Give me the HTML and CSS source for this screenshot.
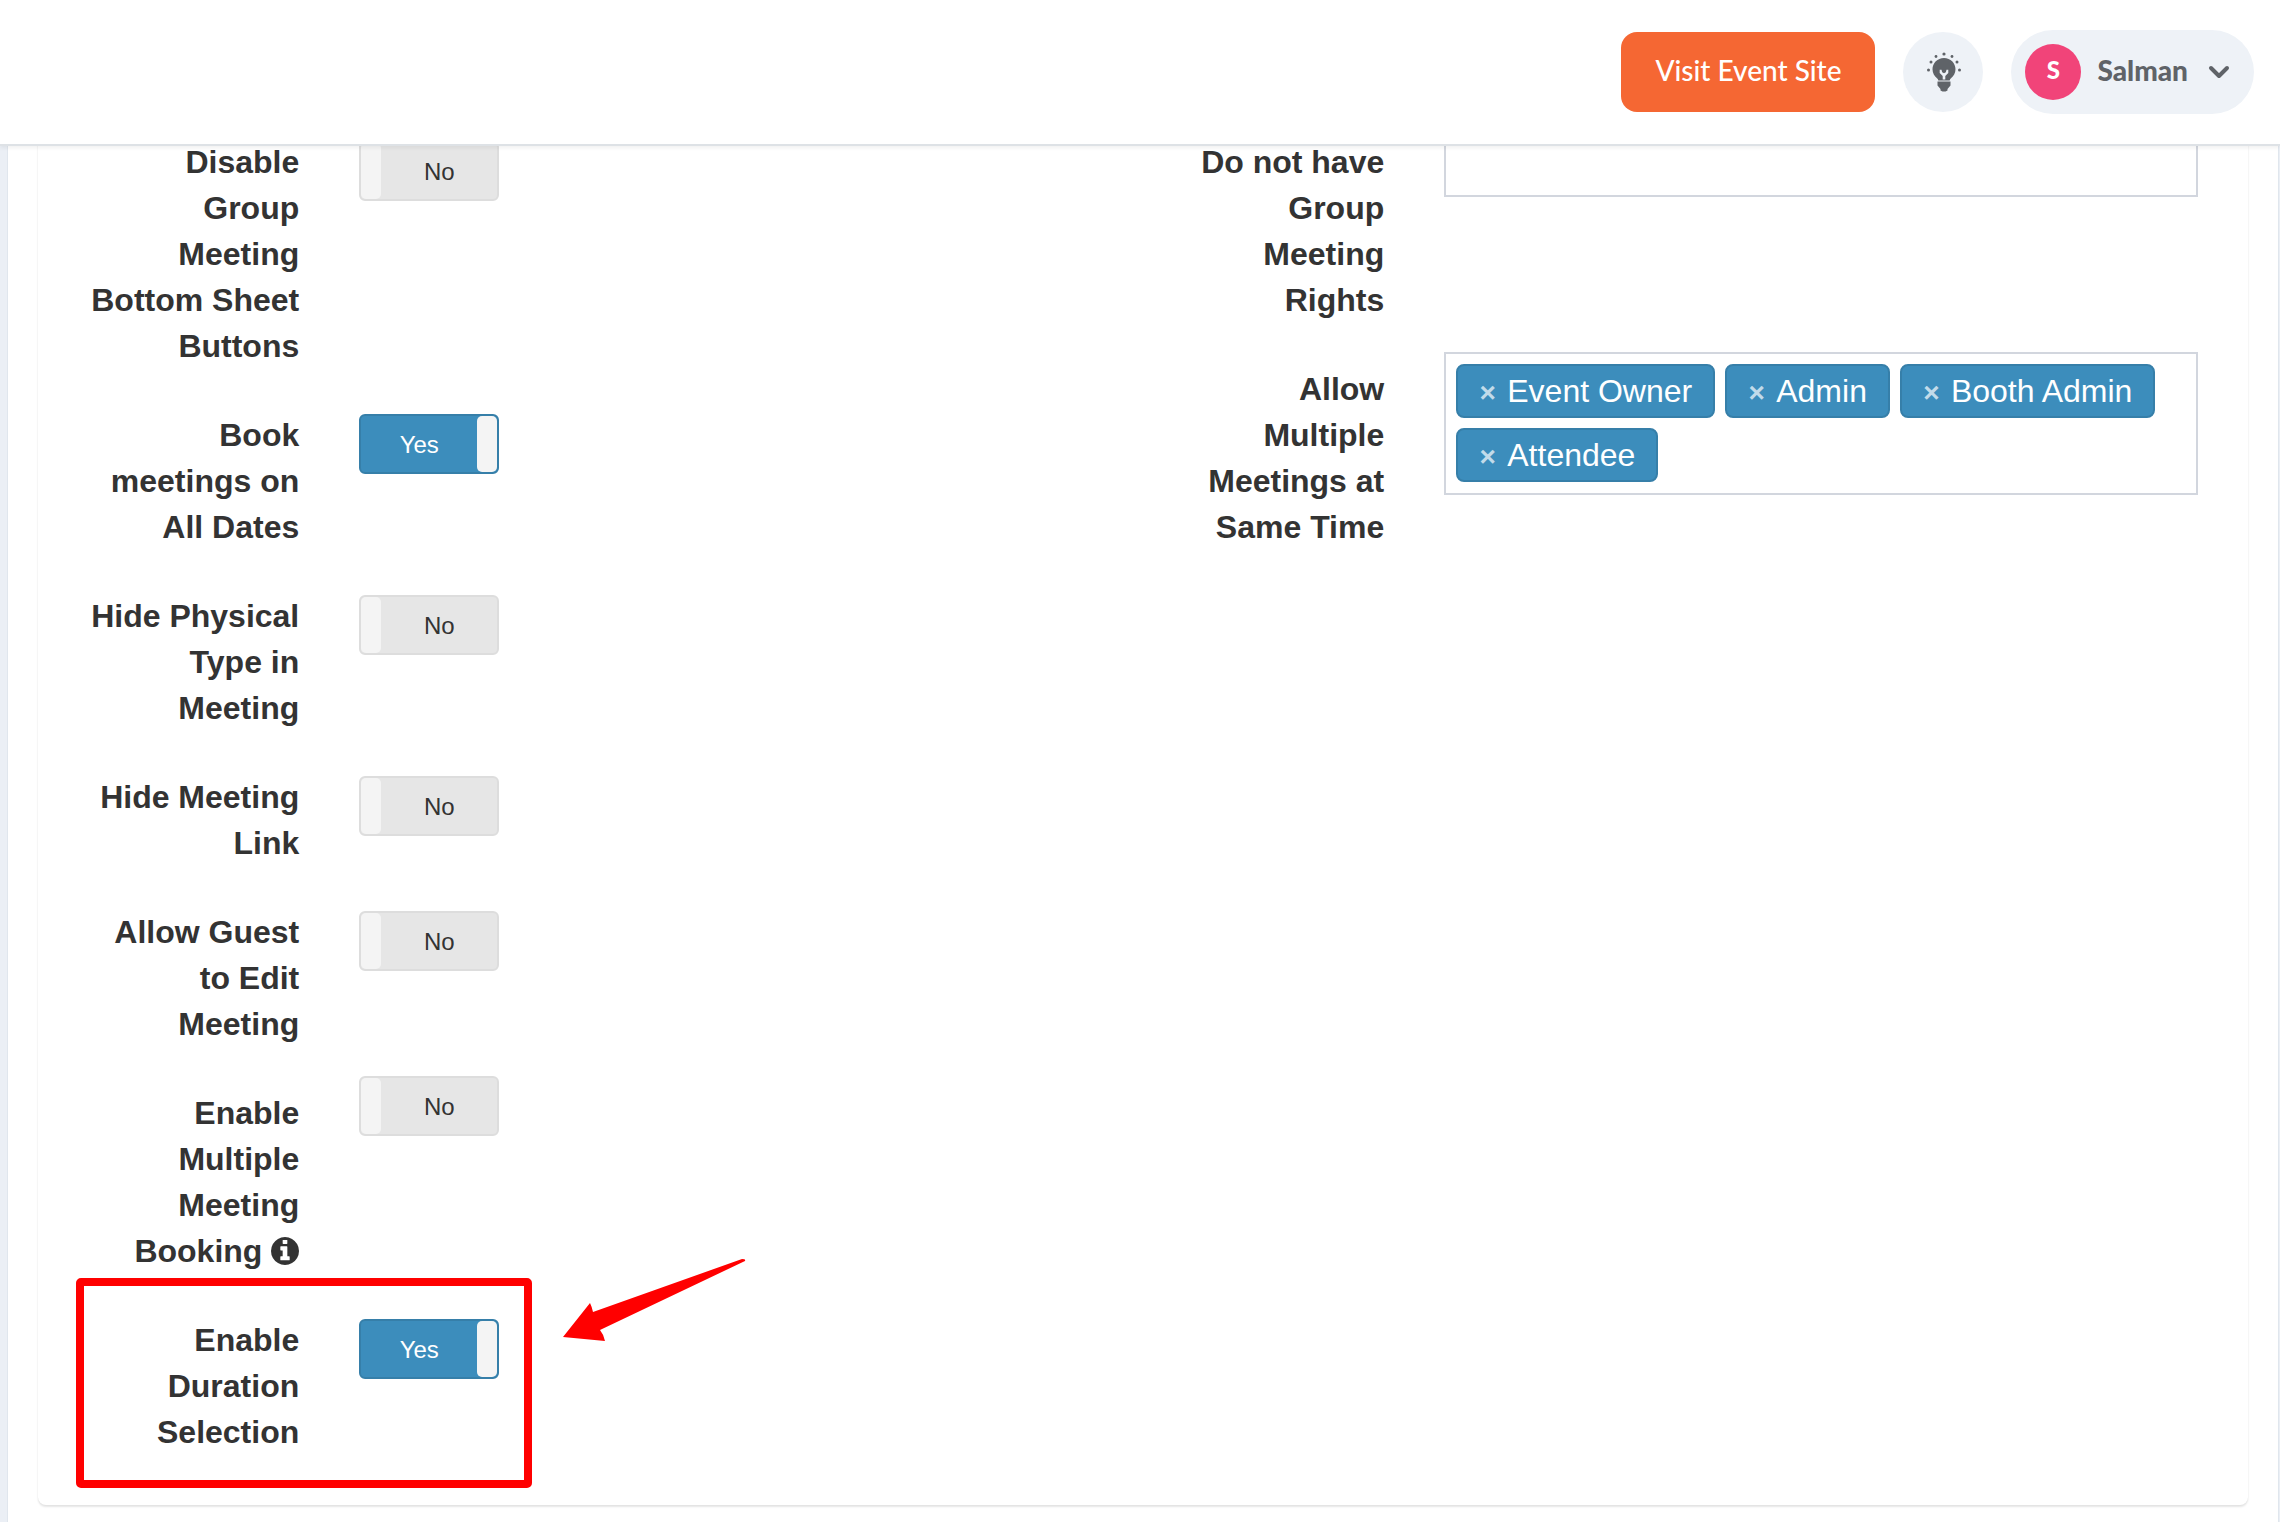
FILE: index.html
```html
<!DOCTYPE html>
<html lang="en">
<head>
<meta charset="utf-8">
<title>Meeting settings</title>
<link rel="stylesheet" href="styles.css">
</head>
<body>
<header class="topbar">
  <a class="visit" href="#">Visit Event Site</a>
  <button class="tips" type="button" aria-label="Tips">
    <svg width="40" height="40" viewBox="0 0 40 40" aria-hidden="true">
      <g fill="#5f6368">
        <path fill-rule="evenodd" d="M21 6c-6.500 0-11.500 5-11.500 11.300 0 4 2 6.700 4.500 9 .8.700 1.200 1.400 1.300 2.200h11.400c.1-.8.500-1.500 1.300-2.200 2.500-2.300 4.500-5 4.500-9C32.500 11 27.500 6 21 6zM19.700 27.500v-3.500L16.700 21v-3.300h1.800l.7 2.500 1.800 1 1.800-1 .7-2.500h1.800V21l-3 3v3.500z"/>
        <path d="M14.500 29.500h13v4L24.500 37v1.500l-2 1h-3l-2-1V37l-3-3.500z"/>
        <circle cx="21" cy="2" r="1.600"/><circle cx="13" cy="4.500" r="1.400"/><circle cx="29" cy="4.500" r="1.400"/>
        <circle cx="8" cy="10" r="1.500"/><circle cx="34" cy="10" r="1.500"/>
        <circle cx="5.500" cy="18" r="1.500"/><circle cx="36.500" cy="18" r="1.500"/>
      </g>
    </svg>
  </button>
  <button class="account" type="button">
    <span class="avatar">S</span>
    <span class="name">Salman</span>
    <svg width="22" height="14" viewBox="0 0 22 14" aria-hidden="true"><path d="M3 3l8 8 8-8" fill="none" stroke="#5f6368" stroke-width="4" stroke-linecap="round" stroke-linejoin="round"/></svg>
  </button>
</header>

<main class="page">
  <form class="panel">
    <div class="column">
      <div class="row">
        <label class="label" for="bottom-sheet">Disable Group Meeting Bottom Sheet Buttons</label>
        <div class="control inset"><span class="toggle"><input type="checkbox" id="bottom-sheet"><span class="off">No</span></span></div>
      </div>
      <div class="row">
        <label class="label" for="all-dates">Book meetings on All Dates</label>
        <div class="control inset"><span class="toggle"><input type="checkbox" id="all-dates" checked><span class="on">Yes</span></span></div>
      </div>
      <div class="row">
        <label class="label" for="hide-physical">Hide Physical Type in Meeting</label>
        <div class="control inset"><span class="toggle"><input type="checkbox" id="hide-physical"><span class="off">No</span></span></div>
      </div>
      <div class="row">
        <label class="label" for="hide-link">Hide Meeting Link</label>
        <div class="control inset"><span class="toggle"><input type="checkbox" id="hide-link"><span class="off">No</span></span></div>
      </div>
      <div class="row">
        <label class="label" for="guest-edit">Allow Guest to Edit Meeting</label>
        <div class="control inset"><span class="toggle"><input type="checkbox" id="guest-edit"><span class="off">No</span></span></div>
      </div>
      <div class="row">
        <label class="label" for="multi-booking">Enable Multiple Meeting Booking <svg class="info" viewBox="0 128 1536 1536" aria-hidden="true"><path fill="currentColor" d="M1024 1376v-160q0-14-9-23t-23-9h-96v-512q0-14-9-23t-23-9h-320q-14 0-23 9t-9 23v160q0 14 9 23t23 9h96v320h-96q-14 0-23 9t-9 23v160q0 14 9 23t23 9h448q14 0 23-9t9-23zm-128-896v-160q0-14-9-23t-23-9h-192q-14 0-23 9t-9 23v160q0 14 9 23t23 9h192q14 0 23-9t9-23zm640 416q0 209-103 385.500t-279.500 279.500-385.500 103-385.500-103-279.500-279.500-103-385.500 103-385.500 279.500-279.500 385.500-103 385.500 103 279.500 279.500 103 385.500z"/></svg></label>
        <div class="control"><span class="toggle"><input type="checkbox" id="multi-booking"><span class="off">No</span></span></div>
      </div>
      <div class="row marked">
        <label class="label" for="duration">Enable Duration Selection</label>
        <div class="control inset"><span class="toggle"><input type="checkbox" id="duration" checked><span class="on">Yes</span></span></div>
        <div class="highlight"></div>
        <svg class="arrow" width="184" height="84" viewBox="0 0 184 84" aria-hidden="true"><path d="M1 79 28 45q2 4 3 9L180 1q4 0 3 2L38 72q4 5 5 11z" fill="#f00"/></svg>
      </div>
    </div>

    <div class="column">
      <div class="row">
        <label class="label" for="no-rights">Do not have Group Meeting Rights</label>
        <div class="control"><input class="field" type="text" id="no-rights"></div>
      </div>
      <div class="row">
        <span class="label" id="same-time">Allow Multiple Meetings at Same Time</span>
        <div class="control">
          <ul class="field tags" aria-labelledby="same-time">
            <li class="tag"><button type="button" aria-label="Remove Event Owner">×</button>Event Owner</li>
            <li class="tag"><button type="button" aria-label="Remove Admin">×</button>Admin</li>
            <li class="tag"><button type="button" aria-label="Remove Booth Admin">×</button>Booth Admin</li>
            <li class="tag"><button type="button" aria-label="Remove Attendee">×</button>Attendee</li>
          </ul>
        </div>
      </div>
    </div>
  </form>
</main>
</body>
</html>
```

FILE: styles.css
```css
* { box-sizing: border-box; }

body {
  margin: 0;
  background: #ebeff5;
  color: #333;
  font: 32px/46px "Liberation Sans", Arial, sans-serif;
}

button { border: 0; padding: 0; cursor: pointer; }

.topbar {
  position: fixed;
  inset: 0 0 auto 0;
  z-index: 2;
  display: flex;
  align-items: center;
  justify-content: flex-end;
  gap: 28px;
  height: 146px;
  padding: 0 26px 0 0;
  background: #fff;
  border-bottom: 2px solid #dee2e6;
  box-shadow: 0 2px 4px rgba(0, 0, 0, .06);
  font-family: Lato, sans-serif;
  font-size: 28px;
}

.visit {
  padding: 15px 34px 19px;
  border-radius: 16px;
  background: #f56733;
  color: #fff;
  font-weight: 500;
  text-decoration: none;
}

.tips {
  display: grid;
  place-items: center;
  width: 80px;
  height: 80px;
  border-radius: 50%;
  background: #eef2f7;
}

.account {
  display: flex;
  align-items: center;
  gap: 16px;
  height: 84px;
  padding: 0 24px 0 14px;
  border-radius: 42px;
  background: #eef2f7;
  color: #5f6368;
  font: 900 28px/46px Lato, sans-serif;
}

.account .name {
  margin-right: 4px;
  padding-bottom: 4px;
}

.avatar {
  width: 56px;
  height: 56px;
  border-radius: 50%;
  background: #f14479;
  color: #fff;
  font-size: 24px;
  line-height: 52px;
  text-align: center;
}

.page {
  min-height: 100vh;
  margin: 0 2px 0 8px;
  padding: 125px 30px 15px;
  background: #fff;
  box-shadow: 0 0 0 1px #e0e6ed;
}

.panel {
  display: grid;
  grid-template-columns: 1fr 1fr;
  padding: 0 20px;
  border-radius: 0 0 8px 8px;
  box-shadow: 0 2px 2px rgba(0, 0, 0, .1), 0 0 2px rgba(0, 0, 0, .05);
}

.row {
  display: grid;
  grid-template-columns: 1fr 3fr;
  padding-bottom: 29px;
}

.label {
  padding: 14px 30px 0;
  font-weight: bold;
  text-align: right;
}

.info {
  width: 28px;
  height: 28px;
  vertical-align: -3px;
}

.control { padding: 0 30px; }
.inset { padding-top: 16px; }

.toggle {
  position: relative;
  display: block;
  width: 140px;
  height: 60px;
}

.toggle input {
  position: absolute;
  inset: 0;
  width: 100%;
  height: 100%;
  margin: 0;
  opacity: 0;
}

.on, .off {
  display: block;
  height: 100%;
  border: 2px solid #ddd;
  border-radius: 6px;
  background: #e6e6e6;
  font-size: 24px;
  line-height: 58px;
  text-align: center;
}

.on {
  border-color: #367fa9;
  background: #3c8dbc;
  color: #fff;
}

.on::after, .off::before {
  content: "";
  float: left;
  width: 20px;
  height: 56px;
  border-radius: 5px;
  background: #f4f4f4;
}

.on::after { float: right; }

.field {
  display: block;
  width: 100%;
  height: 72px;
  margin: 0;
  border: 2px solid #d2d6de;
  background: #fff;
  font: inherit;
}

.tags {
  display: flex;
  flex-wrap: wrap;
  gap: 10px;
  height: auto;
  padding: 10px 10px 11px;
  list-style: none;
}

.tag {
  display: flex;
  height: 54px;
  padding: 0 21px 0 20px;
  border: 2px solid #367fa9;
  border-radius: 8px;
  background: #3c8dbc;
  color: #fff;
  line-height: 50px;
}

.tag button {
  width: 19px;
  margin-right: 10px;
  background: none;
  color: rgba(255, 255, 255, .7);
  font: bold 28px/54px "Liberation Sans", Arial, sans-serif;
}

/* Callout around the last setting */
.marked {
  position: relative;
  padding-bottom: 50px;
}

.highlight {
  position: absolute;
  top: -25px;
  left: 18px;
  width: 456px;
  height: 210px;
  border: 8px solid #f00;
  border-radius: 5px;
  pointer-events: none;
}

.arrow {
  position: absolute;
  top: -45px;
  left: 504px;
}
```
